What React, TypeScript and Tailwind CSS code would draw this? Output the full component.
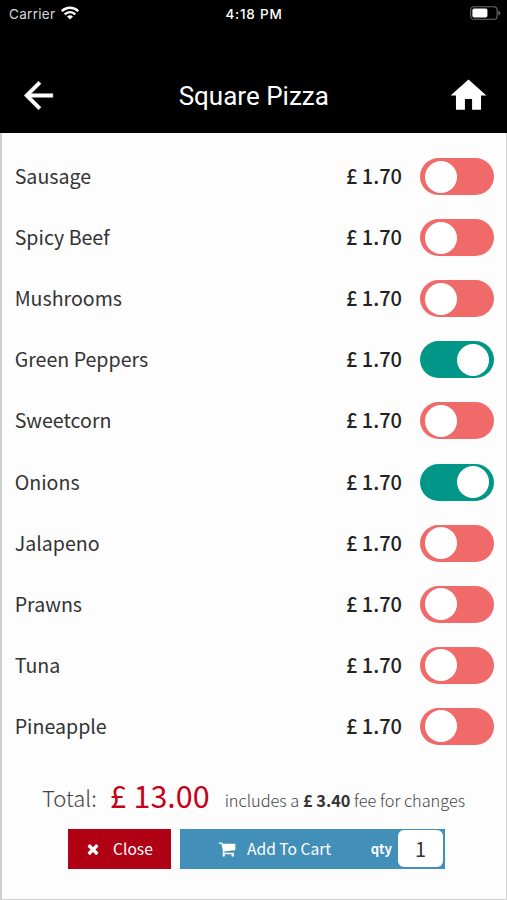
import React, { useState } from 'react';
import clsx from 'clsx';

type Topping = {
  name: string;
  price: string;
  selected: boolean;
};

const INITIAL_TOPPINGS: Topping[] = [
  { name: 'Sausage', price: '1.70', selected: false },
  { name: 'Spicy Beef', price: '1.70', selected: false },
  { name: 'Mushrooms', price: '1.70', selected: false },
  { name: 'Green Peppers', price: '1.70', selected: true },
  { name: 'Sweetcorn', price: '1.70', selected: false },
  { name: 'Onions', price: '1.70', selected: true },
  { name: 'Jalapeno', price: '1.70', selected: false },
  { name: 'Prawns', price: '1.70', selected: false },
  { name: 'Tuna', price: '1.70', selected: false },
  { name: 'Pineapple', price: '1.70', selected: false },
];

function WifiIcon() {
  return (
    <svg viewBox="0 0 18 14" className="w-[18px] h-[14px]" fill="none" stroke="white" strokeWidth="2.4">
      <path d="M0.8 5.2a11.6 11.6 0 0 1 16.4 0" />
      <path d="M3.7 8.3a7.5 7.5 0 0 1 10.6 0" />
      <path d="M9 13.6 6 10.6a4.3 4.3 0 0 1 6 0z" fill="white" stroke="none" />
    </svg>
  );
}

function BatteryIcon() {
  return (
    <svg viewBox="0 0 31 14" className="w-[31px] h-[14px]">
      <rect x="0.7" y="0.7" width="26.4" height="12.6" rx="3.4" fill="none" stroke="#6b6b6b" strokeWidth="1.1" />
      <rect x="2.4" y="2.4" width="15" height="9.2" rx="1.8" fill="white" />
      <path d="M28.4 4.6c1.2.5 1.9 1.4 1.9 2.4s-.7 1.9-1.9 2.4z" fill="#6b6b6b" />
    </svg>
  );
}

function StatusBar() {
  return (
    <div className="h-7 grid grid-cols-3 items-center pl-[9px] pr-[6px] text-white">
      <div className="flex items-center gap-[6px]">
        <span className="text-[13.5px] leading-7 text-[#d8d8d8] tracking-[0.3px]">Carrier</span>
        <span className="pb-[2px]">
          <WifiIcon />
        </span>
      </div>
      <span className="text-center font-medium text-[13.5px] leading-7 tracking-[0.8px] -ml-[2px]">4:18 PM</span>
      <div className="flex justify-end pb-[2px]">
        <BatteryIcon />
      </div>
    </div>
  );
}

function Header() {
  return (
    <header className="h-[133px] bg-black font-['Inter','Liberation_Sans',sans-serif]">
      <StatusBar />
      <div className="h-[105px] flex items-start justify-between pt-[46px] pl-[17px] pr-[16.5px] text-white">
        <svg viewBox="0 0 24 24" className="w-[43px] h-[43px]" fill="currentColor" stroke="currentColor" strokeWidth="0.25">
          <path d="M20 11H7.83l5.59-5.59L12 4l-8 8 8 8 1.41-1.41L7.83 13H20v-2z" />
        </svg>
        <h1 className="font-['Roboto',sans-serif] text-[26px] leading-[44px]">Square Pizza</h1>
        <svg viewBox="0 0 24 24" className="w-[43px] h-[43px]" fill="currentColor">
          <path d="M10 20v-6h4v6h5v-8h3L12 3 2 12h3v8z" />
        </svg>
      </div>
    </header>
  );
}

function Toggle({ on, onChange }: { on: boolean; onChange: () => void }) {
  return (
    <button
      type="button"
      role="switch"
      aria-checked={on}
      onClick={onChange}
      className={clsx(
        'w-[74px] h-[37px] rounded-full flex items-center px-[5px]',
        on ? 'bg-[#009688] justify-end' : 'bg-[#f06a6a] justify-start'
      )}
    >
      <span className="w-8 h-8 rounded-full bg-white" />
    </button>
  );
}

export default function App() {
  const [toppings, setToppings] = useState(INITIAL_TOPPINGS);

  const toggle = (name: string) =>
    setToppings((prev) => prev.map((t) => (t.name === name ? { ...t, selected: !t.selected } : t)));

  return (
    <div className="w-full h-[900px] flex flex-col overflow-hidden bg-[#fdfdfd] font-['Noto_Sans_CJK_SC',sans-serif]">
      <Header />

      <main className="flex-1 border-l-2 border-r border-b border-[#cfcfcf]">
        <ul className="pt-[13px] pl-[12.7px] pr-3">
          {toppings.map((t) => (
            <li key={t.name} className="h-[61.1px] flex items-center leading-[30px]">
              <span className="flex-1 pb-px text-[19.6px] text-[#333]">{t.name}</span>
              <span className="mr-[18px] pb-px text-[20px] font-medium text-[#222]">£ {t.price}</span>
              <Toggle on={t.selected} onChange={() => toggle(t.name)} />
            </li>
          ))}
        </ul>

        {/* Total */}
        <div className="h-[72px] pt-[14px] pl-10 flex items-baseline whitespace-nowrap">
          <span className="relative -top-px text-[22px] font-light text-[#444]">Total:</span>
          <span className="ml-[13px] text-[30.5px] leading-[48px] text-[#c8001a]">£ 13.00</span>
          <span className="relative -top-px ml-[15px] text-[16.35px] font-light text-[#444]">
            includes a <b className="font-bold text-[#333]">£ 3.40</b> fee for changes
          </span>
        </div>

        {/* Actions */}
        <div className="flex pl-[66px] gap-[9px] text-white text-[15.6px]">
          <button type="button" className="w-[103px] h-10 bg-[#b00014] flex items-center pl-[17px]">
            <svg viewBox="0 0 1792 1792" className="w-4 h-4" fill="currentColor">
              <path d="M1490 1322q0 40-28 68l-136 136q-28 28-68 28t-68-28l-294-294-294 294q-28 28-68 28t-68-28l-136-136q-28-28-28-68t28-68l294-294-294-294q-28-28-28-68t28-68l136-136q28-28 68-28t68 28l294 294 294-294q28-28 68-28t68 28l136 136q28 28 28 68t-28 68l-294 294 294 294q28 28 28 68z" />
            </svg>
            <span className="ml-[12px]">Close</span>
          </button>
          <div className="w-[265px] h-10 bg-[#428fb9] flex items-center pl-[38px] pr-[2px]">
            <svg viewBox="0 0 1792 1792" className="w-[18px] h-[18px]" fill="currentColor">
              <path d="M704 1536q0 52-38 90t-90 38-90-38-38-90 38-90 90-38 90 38 38 90zm896 0q0 52-38 90t-90 38-90-38-38-90 38-90 90-38 90 38 38 90zm128-1088v512q0 24-16.5 42.5t-40.5 21.5l-1044 122q13 60 13 70 0 16-24 64h920q26 0 45 19t19 45-19 45-45 19h-1024q-26 0-45-19t-19-45q0-11 8-31.5t16-36 21.5-40 15.5-29.5l-177-823h-204q-26 0-45-19t-19-45 19-45 45-19h256q16 0 28.5 6.5t19.5 15.5 13 24.5 8 26 5.5 29.5 4.5 26h1201q26 0 45 19t19 45z" />
            </svg>
            <span className="ml-[11px]">Add To Cart</span>
            <span className="ml-auto mr-[6px] text-[13px] font-bold">qty</span>
            <span className="w-[45px] h-[37px] rounded-md bg-white text-[#333] text-[20px] leading-[37px] text-center">1</span>
          </div>
        </div>
      </main>
    </div>
  );
}
